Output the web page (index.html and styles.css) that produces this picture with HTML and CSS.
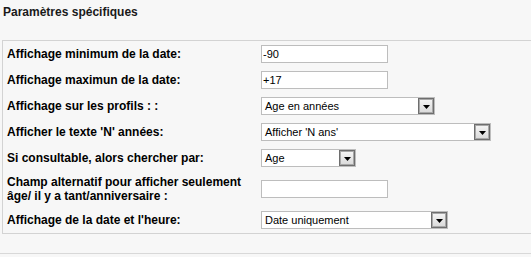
FILE: index.html
```html
<!DOCTYPE html>
<html lang="fr">
<head>
<meta charset="utf-8">
<title>Paramètres spécifiques</title>
<link rel="stylesheet" href="styles.css">
</head>
<body>
<div class="page">
  <h3 class="title">Paramètres spécifiques</h3>
  <div class="box">
    <div class="row">
      <label class="lbl">Affichage minimum de la date:</label>
      <div class="ctl"><input class="txt" type="text" value="-90"></div>
    </div>
    <div class="row">
      <label class="lbl">Affichage maximun de la date:</label>
      <div class="ctl"><input class="txt" type="text" value="+17"></div>
    </div>
    <div class="row">
      <label class="lbl">Affichage sur les profils : :</label>
      <div class="ctl">
        <div class="sel w174"><span class="val">Age en années</span><span class="btn"><svg width="7" height="4" viewBox="0 0 7 4"><polygon points="0,0 7,0 3.5,4" fill="#000"/></svg></span></div>
      </div>
    </div>
    <div class="row">
      <label class="lbl">Afficher le texte 'N' années:</label>
      <div class="ctl">
        <div class="sel w230"><span class="val">Afficher 'N ans'</span><span class="btn"><svg width="7" height="4" viewBox="0 0 7 4"><polygon points="0,0 7,0 3.5,4" fill="#000"/></svg></span></div>
      </div>
    </div>
    <div class="row">
      <label class="lbl">Si consultable, alors chercher par:</label>
      <div class="ctl">
        <div class="sel w95"><span class="val">Age</span><span class="btn"><svg width="7" height="4" viewBox="0 0 7 4"><polygon points="0,0 7,0 3.5,4" fill="#000"/></svg></span></div>
      </div>
    </div>
    <div class="row tall">
      <label class="lbl">Champ alternatif pour afficher seulement âge/ il y a tant/anniversaire :</label>
      <div class="ctl"><input class="txt" type="text" value=""></div>
    </div>
    <div class="row">
      <label class="lbl">Affichage de la date et l'heure:</label>
      <div class="ctl">
        <div class="sel w187"><span class="val">Date uniquement</span><span class="btn"><svg width="7" height="4" viewBox="0 0 7 4"><polygon points="0,0 7,0 3.5,4" fill="#000"/></svg></span></div>
      </div>
    </div>
  </div>
  <div class="next"></div>
</div>
</body>
</html>
```
FILE: styles.css
```css
html, body {
  margin: 0;
  padding: 0;
  background: #f7f7f7;
}
body {
  font-family: "Liberation Sans", Arial, sans-serif;
  color: #000;
  overflow: hidden;
}
.page {
  width: 531px;
  height: 257px;
}
.title {
  margin: 0;
  padding: 5px 3px 0;
  height: 35px;
  font-size: 12px;
  line-height: 14px;
  font-weight: bold;
  color: #1a1a1a;
}
.box {
  margin-left: 2px;
  border: 1px solid #d3d3d3;
  border-right: none;
  padding: 0 0 0 4px;
}
.row {
  display: grid;
  grid-template-columns: 254px 1fr;
  align-items: center;
  min-height: 26px;
}
.row.tall {
  min-height: 36px;
}
.lbl {
  font-size: 12px;
  line-height: 14px;
  font-weight: bold;
  color: #000;
  padding-right: 4px;
}
.ctl {
  display: flex;
  align-items: center;
}
.txt {
  box-sizing: border-box;
  width: 127px;
  height: 18px;
  margin: 0;
  padding: 0 1px;
  border: 1px solid #bdbdbd;
  background: #fff;
  font-family: "Liberation Sans", Arial, sans-serif;
  font-size: 11px;
  color: #000;
  outline: none;
}
.sel {
  box-sizing: border-box;
  height: 18px;
  border: 1px solid #bdbdbd;
  background: #fff;
  display: flex;
  align-items: center;
  justify-content: space-between;
}
.w174 { width: 174px; }
.w230 { width: 230px; }
.w95 { width: 95px; }
.w187 { width: 187px; }
.val {
  padding-left: 3px;
  font-size: 11px;
  line-height: 14px;
  color: #000;
  white-space: nowrap;
}
.btn {
  box-sizing: border-box;
  width: 16px;
  height: 16px;
  border: 1px solid #6e6e6e;
  box-shadow: inset 0 0 0 1px #a8a8a8;
  background: linear-gradient(#f6f6f6, #d9d9d9);
  display: flex;
  align-items: center;
  justify-content: center;
  padding-top: 2px;
}
.btn svg {
  display: block;
}
.next {
  margin-top: 19px;
  border-top: 1px solid #d8d8d8;
}
```
